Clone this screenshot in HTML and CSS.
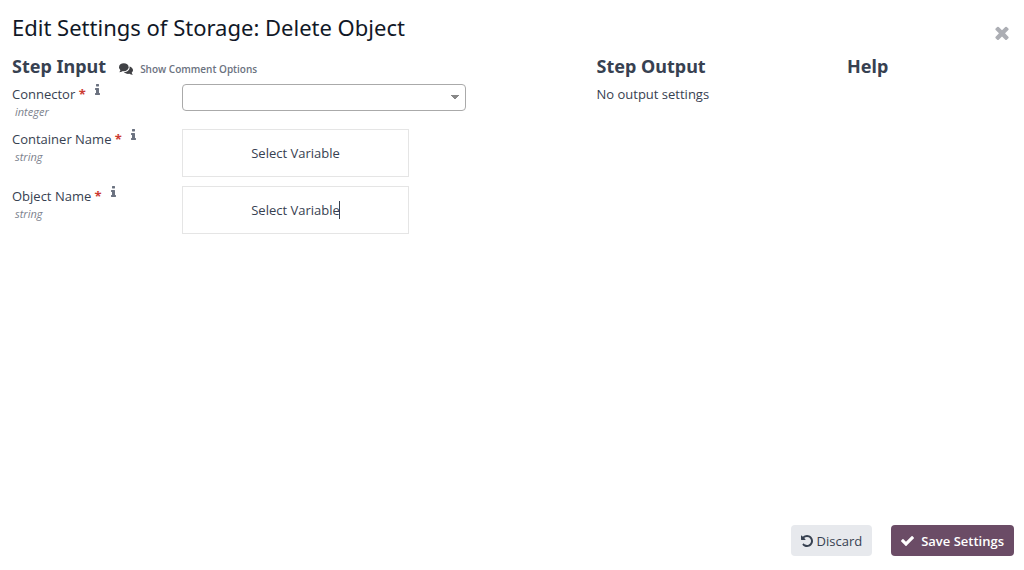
FILE: index.html
```
<!DOCTYPE html>
<html lang="en">
<head>
<meta charset="utf-8">
<title>Edit Settings of Storage: Delete Object</title>
<link rel="stylesheet" href="styles.css">
</head>
<body>
<svg class="sprite" aria-hidden="true">
  <symbol id="info" viewBox="576 128 640 1408"><path d="M1216 1344v128q0 26-19 45t-45 19h-512q-26 0-45-19t-19-45v-128q0-26 19-45t45-19h64v-384h-64q-26 0-45-19t-19-45v-128q0-26 19-45t45-19h384q26 0 45 19t19 45v576h64q26 0 45 19t19 45zm-128-1152v192q0 26-19 45t-45 19h-256q-26 0-45-19t-19-45v-192q0-26 19-45t45-19h256q26 0 45 19t19 45z"/></symbol>
</svg>
<div class="dialog">
  <header class="header">
    <h1 class="title">Edit Settings of Storage: Delete Object</h1>
    <button class="close" type="button" aria-label="Close"><svg viewBox="302 302 1188 1252"><path d="M1490 1322q0 40-28 68l-136 136q-28 28-68 28t-68-28l-294-294-294 294q-28 28-68 28t-68-28l-136-136q-28-28-28-68t28-68l294-294-294-294q-28-28-28-68t28-68l136-136q28-28 68-28t68 28l294 294 294-294q28-28 68-28t68 28l136 136q28 28 28 68t-28 68l-294 294 294 294q28 28 28 68z"/></svg></button>
  </header>
  <main class="columns">
    <section>
      <div class="section-head">
        <h2 class="heading">Step Input</h2>
        <button class="comments" type="button"><svg viewBox="0 0 14 12"><ellipse cx="4.8" cy="4.2" rx="4.8" ry="4"/><path d="M1.6 6 Q1.5 8 .3 9.2 Q2.8 9.2 4.6 7.6Z"/><path d="M10.5 3.4 C12.6 4 14 5.4 14 7.1 C14 8.1 13.5 9 12.7 9.7 C12.9 10.5 13.3 11.1 13.9 11.7 C12.5 11.7 11.3 11.4 10.4 10.8 C8.1 11.2 5.9 10.4 4.9 9.1 C8.3 9.1 11.3 6.6 10.5 3.4Z"/></svg>Show Comment Options</button>
      </div>
      <div class="form">
        <div class="row">
          <div class="label"><label class="name" for="connector">Connector <span class="required">*</span></label><svg class="info"><use href="#info"/></svg><small class="type">integer</small></div>
          <div class="field"><select class="select" id="connector"><option></option></select></div>
        </div>
        <div class="row">
          <div class="label"><label class="name" for="container">Container Name <span class="required">*</span></label><svg class="info"><use href="#info"/></svg><small class="type">string</small></div>
          <div class="field"><button class="variable" id="container" type="button">Select Variable</button></div>
        </div>
        <div class="row">
          <div class="label"><label class="name" for="object">Object Name <span class="required">*</span></label><svg class="info"><use href="#info"/></svg><small class="type">string</small></div>
          <div class="field"><button class="variable" id="object" type="button"><span class="active">Select Variable</span></button></div>
        </div>
      </div>
    </section>
    <section>
      <h2 class="heading">Step Output</h2>
      <p class="note">No output settings</p>
    </section>
    <section>
      <h2 class="heading">Help</h2>
    </section>
  </main>
  <footer class="footer">
    <button class="button" type="button"><svg class="undo" viewBox="128 128 1536 1536"><path d="M1664 896q0 156-61 298t-164 245-245 164-298 61q-172 0-327-72.5t-264-204.5q-7-10-6.5-22.5t8.5-20.5l137-138q10-9 25-9 16 2 23 12 73 95 179 147t225 52q104 0 198.5-40.5t163.5-109.5 109.5-163.5 40.5-198.5-40.5-198.5-109.5-163.5-163.5-109.5-198.5-40.5q-98 0-188 35.5t-160 101.5l137 138q31 30 14 69-17 40-59 40h-448q-26 0-45-19t-19-45v-448q0-42 40-59 39-17 69 14l130 129q107-101 244.5-156.5t284.5-55.5q156 0 298 61t245 164 164 245 61 298z"/></svg>Discard</button>
    <button class="button primary" type="button"><svg class="check" viewBox="121 334 1550 1188"><path d="M1671 566q0 40-28 68l-724 724-136 136q-28 28-68 28t-68-28l-136-136-362-362q-28-28-28-68t28-68l136-136q28-28 68-28t68 28l294 295 656-657q28-28 68-28t68 28l136 136q28 28 28 68z"/></svg>Save Settings</button>
  </footer>
</div>
</body>
</html>
```
FILE: styles.css
```
* { box-sizing: border-box; }
body {
  margin: 0;
  background: #fff;
  color: #374151;
  font-family: "Segoe UI", "Open Sans", "Noto Sans", sans-serif;
  font-size: 13px;
  line-height: 20px;
}
button, select { font: inherit; color: inherit; }
button { cursor: pointer; }
svg { fill: currentColor; flex: none; }
h1, h2, p { margin: 0; }
.sprite { display: none; }
.dialog {
  display: flex;
  flex-direction: column;
  min-height: 100vh;
  padding: 12px 10px 14px 12px;
}
.header {
  display: flex;
  justify-content: space-between;
  align-items: flex-start;
  height: 41px;
}
.title {
  color: #111827;
  font-family: "Segoe UI", "Noto Sans", sans-serif;
  font-size: 22px;
  font-weight: 400;
  line-height: 30px;
}
.close {
  margin: 9px 0 0;
  padding: 5px;
  border: 0;
  background: none;
  color: #acaeb4;
}
.close svg { display: block; width: 14px; height: 14px; }
.columns {
  display: grid;
  grid-template-columns: 7fr 3fr 2fr;
  flex: 1;
  align-content: start;
}
.heading {
  font-family: "Segoe UI", "Noto Sans", sans-serif;
  font-size: 18px;
  font-weight: 700;
  line-height: 26px;
}
.section-head { display: flex; align-items: center; gap: 13px; }
.comments {
  display: flex;
  align-items: center;
  gap: 7px;
  height: 26px;
  padding: 6px 0 0;
  border: 0;
  background: none;
  color: #6b7280;
  font-size: 10px;
  font-weight: 600;
}
.comments svg { width: 14px; height: 12px; color: #404145; }
.form { display: flex; flex-direction: column; gap: 9px; padding-top: 5px; }
.row { display: grid; grid-template-columns: 170px 1fr; }
.label {
  display: grid;
  grid-template-columns: auto 1fr;
  align-content: start;
  column-gap: 9px;
  line-height: 20px;
}
.required { color: #cc3a32; font-weight: 700; }
.info { width: 5px; height: 11px; color: #6b7280; }
.type {
  grid-column: 1 / -1;
  padding-left: 3px;
  color: #7c828d;
  font-size: 11px;
  font-style: italic;
  line-height: 16px;
}
.field { display: flex; align-items: flex-start; }
.select {
  width: 284px;
  height: 27px;
  border: 1px solid #aaa;
  border-radius: 4px;
  appearance: none;
  background: #fff conic-gradient(from -40deg at 50% 100%, #888 80deg, transparent 0) right 6px center / 8px 5px no-repeat;
}
.variable {
  width: 227px;
  height: 48px;
  border: 1px solid #e5e5e5;
  background: #fff;
}
.active { position: relative; }
.active::after {
  content: "";
  position: absolute;
  top: 0;
  right: 0;
  width: 1px;
  height: 18px;
  background: #374151;
}
.note { padding-top: 5px; }
.footer { display: flex; justify-content: flex-end; gap: 19px; }
.button {
  display: flex;
  align-items: center;
  gap: 4px;
  padding: 6px 10px 5px;
  border: 0;
  border-radius: 4px;
  background: #e7e9ed;
  font-weight: 500;
}
.primary { gap: 7px; background: #6b4c66; color: #fff; font-weight: 600; }
.undo { width: 12px; height: 12px; }
.check { width: 13px; height: 10px; }
```
